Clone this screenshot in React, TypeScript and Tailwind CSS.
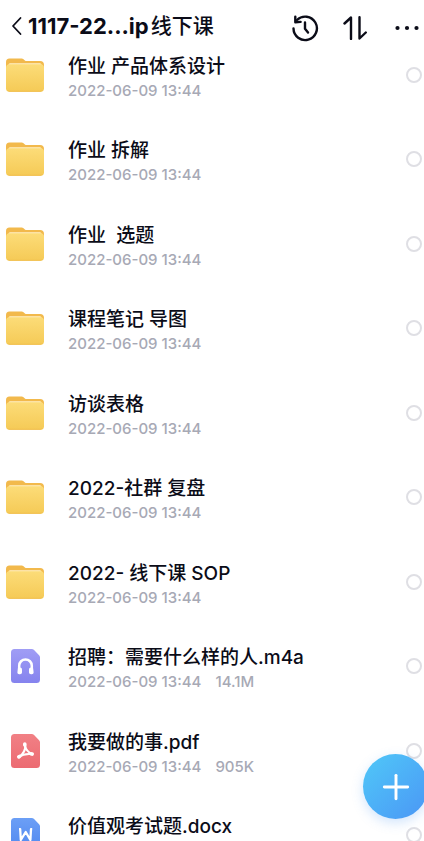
import React, { useState } from 'react';
import { Plus } from 'lucide-react';

type FileKind = 'folder' | 'audio' | 'pdf' | 'word';

interface FileItem {
  id: number;
  name: string;
  kind: FileKind;
  date?: string;
  size?: string;
}

const files: FileItem[] = [
  { id: 1, name: '作业 产品体系设计', kind: 'folder', date: '2022-06-09 13:44' },
  { id: 2, name: '作业 拆解', kind: 'folder', date: '2022-06-09 13:44' },
  { id: 3, name: '作业  选题', kind: 'folder', date: '2022-06-09 13:44' },
  { id: 4, name: '课程笔记 导图', kind: 'folder', date: '2022-06-09 13:44' },
  { id: 5, name: '访谈表格', kind: 'folder', date: '2022-06-09 13:44' },
  { id: 6, name: '2022-社群 复盘', kind: 'folder', date: '2022-06-09 13:44' },
  { id: 7, name: '2022- 线下课 SOP', kind: 'folder', date: '2022-06-09 13:44' },
  { id: 8, name: '招聘：需要什么样的人.m4a', kind: 'audio', date: '2022-06-09 13:44', size: '14.1M' },
  { id: 9, name: '我要做的事.pdf', kind: 'pdf', date: '2022-06-09 13:44', size: '905K' },
  { id: 10, name: '价值观考试题.docx', kind: 'word' },
];

const FolderIcon = () => (
  <svg className="w-[38px] h-[34px]" viewBox="0 0 38 34" fill="none">
    <defs>
      <linearGradient id="folder-front" x1="0" y1="0" x2="0" y2="1">
        <stop offset="0" stopColor="#fcdc78" />
        <stop offset="1" stopColor="#f5ca56" />
      </linearGradient>
    </defs>
    <path
      d="M0 4a3.500 3.500 0 0 1 3.500-3.500h11.500c1.200 0 2 .3 2.800 1l1.100.9c.5.4 1 .6 1.700.6H34a4 4 0 0 1 4 4v18H0z"
      fill="#f2b94c"
    />
    <path d="M2.500 6.700A1.500 1.500 0 0 1 4 5.200h30a1.500 1.500 0 0 1 1.500 1.500V12h-33z" fill="#fff0c4" />
    <rect y="6.300" width="38" height="27.500" rx="3.500" fill="url(#folder-front)" />
    <path d="M1.200 32a3.500 3.500 0 0 0 2.300 1.800h31a3.500 3.500 0 0 0 2.300-1.800c-.7.500-1.300.8-2.300.8h-31c-1 0-1.600-.3-2.300-.8z" fill="#f1bf4d" />
  </svg>
);

const sheetColors: Record<Exclude<FileKind, 'folder'>, { from: string; to: string }> = {
  audio: { from: '#a09df5', to: '#8583ee' },
  pdf: { from: '#f18085', to: '#ec6b72' },
  word: { from: '#6c9ff6', to: '#4f87ef' },
};

const SheetIcon = ({ kind }: { kind: Exclude<FileKind, 'folder'> }) => {
  const colors = sheetColors[kind];

  return (
    <svg className="w-[29px] h-[34px]" viewBox="0 0 29 34" fill="none">
      <defs>
        <linearGradient id={`sheet-${kind}`} x1="0" y1="0" x2="0" y2="1">
          <stop offset="0" stopColor={colors.from} />
          <stop offset="1" stopColor={colors.to} />
        </linearGradient>
      </defs>
      <path
        d="M3.500 0h17.300c.8 0 1.500.3 2 .8l5.300 5.400c.6.6.9 1.300.9 2.100v22.200a3.500 3.500 0 0 1-3.500 3.500h-22A3.500 3.500 0 0 1 0 30.500v-27A3.500 3.500 0 0 1 3.500 0z"
        fill={`url(#sheet-${kind})`}
      />
      {kind === 'audio' && (
        <>
          <path d="M8.200 22v-5.300a6.300 6.300 0 0 1 12.600 0V22" stroke="#fff" strokeWidth="2.500" />
          <path d="M7 18.500h2c1.200 0 2 .8 2 2v2.700c0 1.200-.8 2-2 2h-.8c-1.200 0-1.800-.7-1.800-1.900z" fill="#fff" />
          <path d="M22 18.500h-2c-1.200 0-2 .8-2 2v2.700c0 1.200.8 2 2 2h.8c1.200 0 1.800-.7 1.800-1.900z" fill="#fff" />
        </>
      )}
      {kind === 'pdf' && (
        <g stroke="#fff" strokeLinecap="round" strokeLinejoin="round">
          <path d="M13.800 10.200c.9 2.600.6 4.600-.8 7.300-1.300 2.500-2.700 4.300-5 5.500" strokeWidth="2.200" />
          <path d="M14 12c.8 3.300 3.200 6.300 6.800 8" strokeWidth="2" />
          <path d="M8 22.700c3.300-2.300 8-3.100 12.800-2.600" strokeWidth="2" />
          <path d="M13.800 10v1M7.800 22.900l.7-.4M20.500 19.900l.7.200" strokeWidth="3.600" />
        </g>
      )}
      {kind === 'word' && (
        <path
          d="M8 11.200h1.200L9.800 22l4.900-8 4.700 8 .6-10.800h1.200"
          stroke="#fff"
          strokeWidth="2.300"
          strokeLinejoin="round"
        />
      )}
    </svg>
  );
};

const FileRow = ({ file, checked, onToggle }: { file: FileItem; checked: boolean; onToggle: () => void }) => {
  return (
    <li className="flex items-center h-[84px] odd:h-[85px] pl-[6px] pr-[2px]">
      <div className="w-[38px] mr-6 flex shrink-0 justify-center">
        {file.kind === 'folder' ? <FolderIcon /> : <SheetIcon kind={file.kind} />}
      </div>
      <label htmlFor={`file-${file.id}`} className="flex-1 min-w-0 pt-2">
        <span className="block text-[19px] leading-6 font-medium text-[#0b0c18] whitespace-pre">
          {file.name}
        </span>
        <span className="flex gap-[14px] min-h-6 text-[15px] leading-6 font-medium text-[#a7a9b5]">
          {file.date && <span>{file.date}</span>}
          {file.size && <span>{file.size}</span>}
        </span>
      </label>
      <input
        id={`file-${file.id}`}
        type="checkbox"
        checked={checked}
        onChange={onToggle}
        className="appearance-none w-4 h-4 shrink-0 rounded-full border-2 border-[#dfdfe4] checked:bg-blue-500"
      />
    </li>
  );
};

export default function App() {
  const [selected, setSelected] = useState<number[]>([]);

  const handleToggle = (id: number) => {
    setSelected((prev) => (prev.includes(id) ? prev.filter((item) => item !== id) : [...prev, id]));
  };

  return (
    <div className="h-screen flex flex-col overflow-hidden bg-white font-['Inter','Noto_Sans_CJK_SC',sans-serif]">
      {/* Header */}
      <header className="flex items-center shrink-0 h-8 mt-[10px] pl-[10px] pr-[5px] text-[#0b0c18]">
        <button aria-label="返回" className="mr-[6px]">
          <svg className="w-3 h-5" viewBox="0 0 12 20" fill="none" stroke="currentColor" strokeWidth="1.800">
            <path d="M10.500 2L3 10l7.500 8" strokeLinecap="round" strokeLinejoin="round" />
          </svg>
        </button>
        <h1 className="flex-1 flex items-center gap-[2px] leading-8 whitespace-nowrap">
          <span className="text-[22px] font-bold">1117-22...ip</span>
          <span className="text-[21px] font-medium">线下课</span>
        </h1>
        <div className="flex items-center pt-1">
          <button aria-label="历史记录">
            <svg className="w-7 h-7" viewBox="0 0 28 28" fill="none" stroke="currentColor" strokeWidth="2.400" strokeLinecap="round" strokeLinejoin="round">
              <path d="M2.500 14.500A11.700 11.700 0 1 0 6 6" />
              <path d="M4.300 2.800v5.400l5.300-.3" />
              <path d="M14 8.500v6.300l3 3.700" />
            </svg>
          </button>
          <button aria-label="排序" className="ml-6">
            <svg className="w-6 h-6" viewBox="0 0 24 24" fill="none" stroke="currentColor" strokeWidth="2.400" strokeLinecap="round" strokeLinejoin="round">
              <path d="M1.500 7.500l6.500-6v21.500" />
              <path d="M16.500 1.200v21.300l6.300-6" />
            </svg>
          </button>
          <button aria-label="更多" className="ml-7">
            <svg className="w-6 h-6" viewBox="0 0 24 24" fill="currentColor">
              <circle cx="2.500" cy="12" r="2.100" />
              <circle cx="12" cy="12" r="2.100" />
              <circle cx="21.500" cy="12" r="2.100" />
            </svg>
          </button>
        </div>
      </header>

      {/* File list */}
      <ul className="flex-1 min-h-0 overflow-hidden -mt-[10px]">
        {files.map((file) => (
          <FileRow
            key={file.id}
            file={file}
            checked={selected.includes(file.id)}
            onToggle={() => handleToggle(file.id)}
          />
        ))}
      </ul>

      {/* Upload button */}
      <button
        aria-label="上传"
        className="fixed bottom-[22px] -right-1 w-[65px] h-[65px] flex items-center justify-center rounded-full bg-linear-to-br from-[#50c8f8] to-[#4b96f5] text-white shadow-[0_4px_12px_rgba(75,150,245,0.25)]"
      >
        <Plus className="w-10 h-10" strokeWidth={1.75} />
      </button>
    </div>
  );
}
